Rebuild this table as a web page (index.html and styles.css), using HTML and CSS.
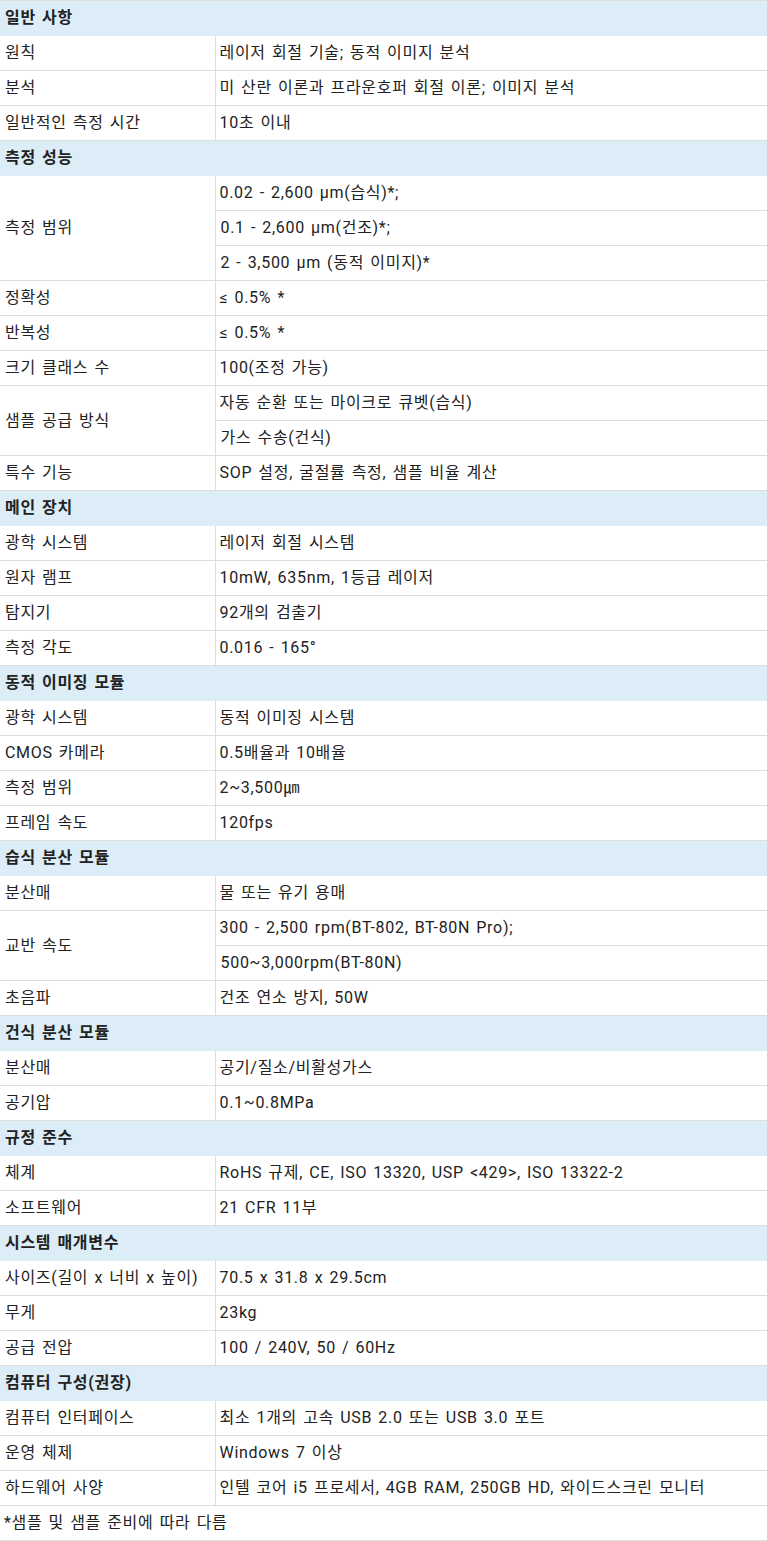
FILE: index.html
```html
<!DOCTYPE html>
<html lang="ko">
<head>
<meta charset="utf-8">
<title>사양</title>
<link rel="stylesheet" href="styles.css">
</head>
<body>
<table class="spec">
<colgroup><col class="c1"><col class="c2"></colgroup>
<tbody>
<tr class="sec"><th colspan="2">일반 사항</th></tr>
<tr><td>원칙</td><td>레이저 회절 기술; 동적 이미지 분석</td></tr>
<tr><td>분석</td><td>미 산란 이론과 프라운호퍼 회절 이론; 이미지 분석</td></tr>
<tr><td>일반적인 측정 시간</td><td>10초 이내</td></tr>
<tr class="sec"><th colspan="2">측정 성능</th></tr>
<tr><td rowspan="3">측정 범위</td><td>0.02 - 2,600 µm(습식)*;</td></tr>
<tr><td>0.1 - 2,600 µm(건조)*;</td></tr>
<tr><td>2 - 3,500 µm (동적 이미지)*</td></tr>
<tr><td>정확성</td><td>≤ 0.5% *</td></tr>
<tr><td>반복성</td><td>≤ 0.5% *</td></tr>
<tr><td>크기 클래스 수</td><td>100(조정 가능)</td></tr>
<tr><td rowspan="2">샘플 공급 방식</td><td>자동 순환 또는 마이크로 큐벳(습식)</td></tr>
<tr><td>가스 수송(건식)</td></tr>
<tr><td>특수 기능</td><td>SOP 설정, 굴절률 측정, 샘플 비율 계산</td></tr>
<tr class="sec"><th colspan="2">메인 장치</th></tr>
<tr><td>광학 시스템</td><td>레이저 회절 시스템</td></tr>
<tr><td>원자 램프</td><td>10mW, 635nm, 1등급 레이저</td></tr>
<tr><td>탐지기</td><td>92개의 검출기</td></tr>
<tr><td>측정 각도</td><td>0.016 - 165°</td></tr>
<tr class="sec"><th colspan="2">동적 이미징 모듈</th></tr>
<tr><td>광학 시스템</td><td>동적 이미징 시스템</td></tr>
<tr><td>CMOS 카메라</td><td>0.5배율과 10배율</td></tr>
<tr><td>측정 범위</td><td>2~3,500㎛</td></tr>
<tr><td>프레임 속도</td><td>120fps</td></tr>
<tr class="sec"><th colspan="2">습식 분산 모듈</th></tr>
<tr><td>분산매</td><td>물 또는 유기 용매</td></tr>
<tr><td rowspan="2">교반 속도</td><td>300 - 2,500 rpm(BT-802, BT-80N Pro);</td></tr>
<tr><td>500~3,000rpm(BT-80N)</td></tr>
<tr><td>초음파</td><td>건조 연소 방지, 50W</td></tr>
<tr class="sec"><th colspan="2">건식 분산 모듈</th></tr>
<tr><td>분산매</td><td>공기/질소/비활성가스</td></tr>
<tr><td>공기압</td><td>0.1~0.8MPa</td></tr>
<tr class="sec"><th colspan="2">규정 준수</th></tr>
<tr><td>체계</td><td>RoHS 규제, CE, ISO 13320, USP &lt;429&gt;, ISO 13322-2</td></tr>
<tr><td>소프트웨어</td><td>21 CFR 11부</td></tr>
<tr class="sec"><th colspan="2">시스템 매개변수</th></tr>
<tr><td>사이즈(길이 x 너비 x 높이)</td><td>70.5 x 31.8 x 29.5cm</td></tr>
<tr><td>무게</td><td>23kg</td></tr>
<tr><td>공급 전압</td><td>100 / 240V, 50 / 60Hz</td></tr>
<tr class="sec"><th colspan="2">컴퓨터 구성(권장)</th></tr>
<tr><td>컴퓨터 인터페이스</td><td>최소 1개의 고속 USB 2.0 또는 USB 3.0 포트</td></tr>
<tr><td>운영 체제</td><td>Windows 7 이상</td></tr>
<tr><td>하드웨어 사양</td><td>인텔 코어 i5 프로세서, 4GB RAM, 250GB HD, 와이드스크린 모니터</td></tr>
<tr class="note"><td colspan="2">*샘플 및 샘플 준비에 따라 다름</td></tr>
</tbody>
</table>
</body>
</html>
```

FILE: styles.css
```css
html, body {
  margin: 0;
  padding: 0;
  background: #ffffff;
}

body {
  font-family: Roboto, "Noto Sans CJK KR", sans-serif;
  font-size: 16px;
  letter-spacing: 0.7px;
  word-spacing: 1.5px;
  color: #222222;
}

.spec {
  width: 767px;
  border-collapse: collapse;
  table-layout: fixed;
}

.spec .c1 {
  width: 215px;
}

.spec th,
.spec td {
  height: 34px;
  padding: 0 4px 0 5px;
  border-top: 1px solid #dddddd;
  border-bottom: 1px solid #dddddd;
  text-align: left;
  vertical-align: middle;
  line-height: 20px;
  white-space: nowrap;
}

.spec td {
  font-weight: 400;
}

.spec td + td {
  border-left: 1px solid #dddddd;
  padding-left: 4px;
}

.spec tr td[rowspan] {
  border-right: 1px solid #dddddd;
}

.sec th {
  background: #dcedf8;
  font-weight: 700;
  border-color: #dcedf8;
}

.spec tr:first-child th {
  border-top-color: #dddddd;
}

.note td {
  padding-left: 4px;
}
```
